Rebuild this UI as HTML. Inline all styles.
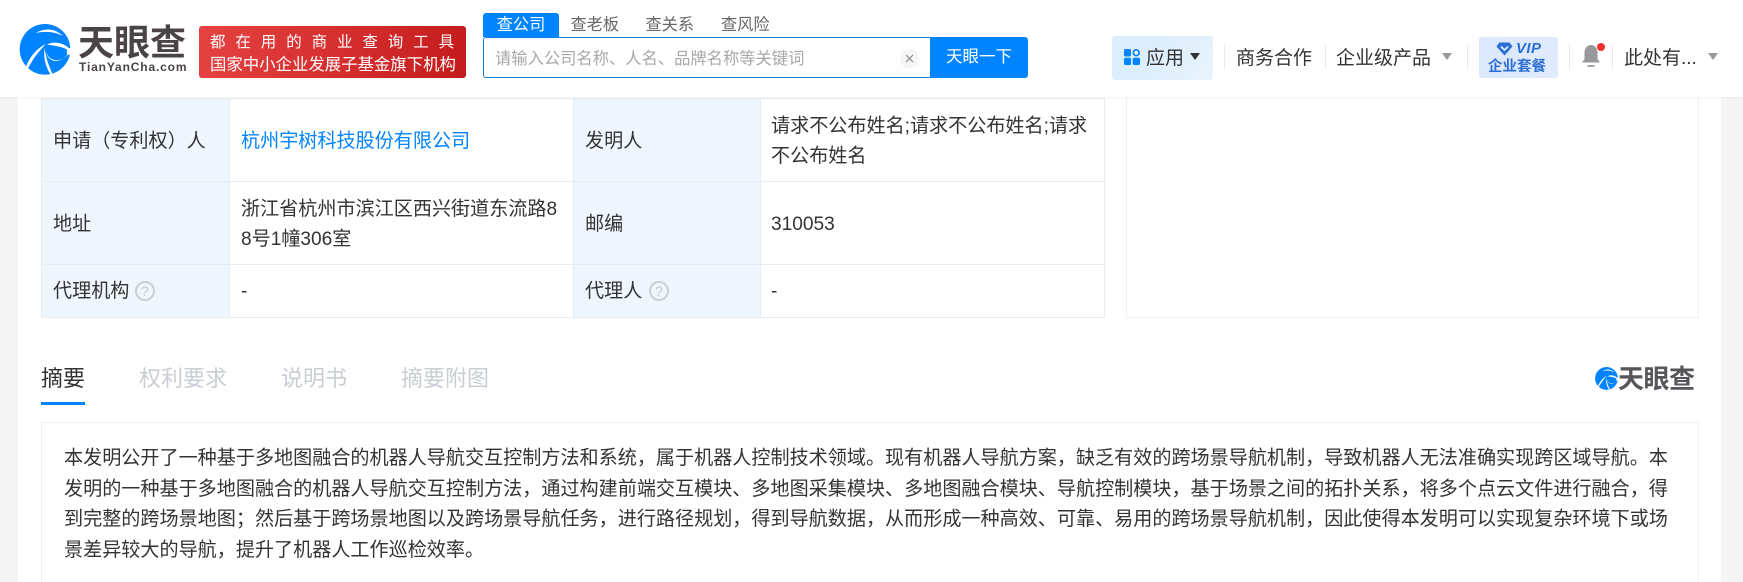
<!DOCTYPE html>
<html lang="zh-CN"><head><meta charset="utf-8"><title>天眼查</title>
<style>
html,body{margin:0;padding:0;width:1743px;height:582px;overflow:hidden}
body{font-family:"Liberation Sans","Noto Sans CJK SC",sans-serif;color:#333}
#w{position:absolute;left:0;top:0;width:1743px;height:582px;overflow:hidden;background:#f5f5f5}
.a{position:absolute;white-space:nowrap}
.t{position:absolute;white-space:nowrap;font-size:19.100px;line-height:30px;color:#333}
.lb{position:absolute;background:#eff6fd}
.h{position:absolute;background:#e6edf5}
.sep{position:absolute;width:1px;height:24px;top:45px;background:#e8e8e8}
.c{position:absolute;width:0;height:0;border-left:5.500px solid transparent;border-right:5.500px solid transparent;border-top:7px solid #999}
</style></head><body><div id="w">
<div class="a" style="left:18px;top:0;width:1703px;height:582px;background:#fff"></div>

<!-- table -->
<div class="lb" style="left:41px;top:98px;width:189px;height:220px"></div>
<div class="lb" style="left:573px;top:98px;width:188px;height:220px"></div>
<div class="h" style="left:41px;top:98px;width:1064px;height:1px"></div>
<div class="h" style="left:41px;top:181px;width:1064px;height:1px"></div>
<div class="h" style="left:41px;top:264px;width:1064px;height:1px"></div>
<div class="h" style="left:41px;top:317px;width:1064px;height:1px"></div>
<div class="h" style="left:41px;top:98px;width:1px;height:220px"></div>
<div class="h" style="left:229px;top:98px;width:1px;height:220px"></div>
<div class="h" style="left:573px;top:98px;width:1px;height:220px"></div>
<div class="h" style="left:760px;top:98px;width:1px;height:220px"></div>
<div class="h" style="left:1104px;top:98px;width:1px;height:220px"></div>
<div class="a" style="left:1126px;top:90px;width:571px;height:227px;border:1px solid #eef0f5;border-top:0"></div>

<div class="t" style="left:53px;top:127px">申请（专利权）人</div>
<div class="t" style="left:241px;top:127px;color:#0084ff">杭州宇树科技股份有限公司</div>
<div class="t" style="left:585px;top:127px">发明人</div>
<div class="t" style="left:771px;top:112px">请求不公布姓名;请求不公布姓名;请求</div>
<div class="t" style="left:771px;top:142px">不公布姓名</div>
<div class="t" style="left:53px;top:210px">地址</div>
<div class="t" style="left:241px;top:195px">浙江省杭州市滨江区西兴街道东流路8</div>
<div class="t" style="left:241px;top:225px">8号1幢306室</div>
<div class="t" style="left:585px;top:210px">邮编</div>
<div class="t" style="left:771px;top:210px">310053</div>
<div class="t" style="left:53px;top:277px">代理机构</div>
<div class="a" style="left:135px;top:281px;width:16px;height:16px;border:2px solid #ccd0d6;border-radius:50%;font-size:14px;line-height:16px;text-align:center;color:#c4c8ce">?</div>
<div class="t" style="left:241px;top:277px">-</div>
<div class="t" style="left:585px;top:277px">代理人</div>
<div class="a" style="left:649px;top:281px;width:16px;height:16px;border:2px solid #ccd0d6;border-radius:50%;font-size:14px;line-height:16px;text-align:center;color:#c4c8ce">?</div>
<div class="t" style="left:771px;top:277px">-</div>

<!-- tabs -->
<div class="a" style="left:41px;top:363px;font-size:22px;line-height:32px;color:#333">摘要</div>
<div class="a" style="left:41px;top:402px;width:44px;height:3px;background:#0084ff"></div>
<div class="a" style="left:139px;top:363px;font-size:22px;line-height:32px;color:#c9cdd4">权利要求</div>
<div class="a" style="left:281px;top:363px;font-size:22px;line-height:32px;color:#c9cdd4">说明书</div>
<div class="a" style="left:401px;top:363px;font-size:22px;line-height:32px;color:#c9cdd4">摘要附图</div>

<svg class="a" style="left:1595px;top:367px" width="23" height="23" viewBox="28 27 155 155"><circle cx="105.500" cy="104" r="77" fill="#0084ff"/><path d="M78 54C105 38 138 40 160 64C136 50 108 48 78 54Z" fill="#fff"/><path d="M112 90C132 78 160 84 178 100L178 108C160 96 135 92 112 90Z" fill="#fff"/><path d="M108 112C112 135 140 155 172 122L178 118C150 146 120 142 108 112Z" fill="#fff"/><path d="M108 88C80 100 56 130 44 166L50 170C66 136 86 110 108 88Z" fill="#fff"/><path d="M104 100C100 130 108 158 122 180L128 178C116 152 108 128 104 100Z" fill="#fff"/><path d="M172 100H190V120H172Z" fill="#fff"/></svg>
<div class="a" style="left:1618px;top:364px;font-size:26px;line-height:30px;font-weight:700;color:#55565b;letter-spacing:-.5px">天眼查</div>

<!-- abstract -->
<div class="a" style="left:41px;top:422px;width:1656px;height:170px;border:1px solid #eef0f2"></div>
<div class="a" style="left:64px;top:444px;font-size:19.100px;line-height:30.500px;color:#333">本发明公开了一种基于多地图融合的机器人导航交互控制方法和系统，属于机器人控制技术领域。现有机器人导航方案，缺乏有效的跨场景导航机制，导致机器人无法准确实现跨区域导航。本<br>发明的一种基于多地图融合的机器人导航交互控制方法，通过构建前端交互模块、多地图采集模块、多地图融合模块、导航控制模块，基于场景之间的拓扑关系，将多个点云文件进行融合，得<br>到完整的跨场景地图；然后基于跨场景地图以及跨场景导航任务，进行路径规划，得到导航数据，从而形成一种高效、可靠、易用的跨场景导航机制，因此使得本发明可以实现复杂环境下或场<br>景差异较大的导航，提升了机器人工作巡检效率。</div>

<!-- header -->
<div class="a" style="left:0;top:0;width:1743px;height:97px;background:#fff;box-shadow:0 1px 2px rgba(0,0,0,.05)"></div>

<svg class="a" style="left:19px;top:24px" width="52" height="51" viewBox="28 27 155 155"><circle cx="105.500" cy="104" r="77" fill="#0084ff"/><path d="M78 54C105 38 138 40 160 64C136 50 108 48 78 54Z" fill="#fff"/><path d="M112 90C132 78 160 84 178 100L178 108C160 96 135 92 112 90Z" fill="#fff"/><path d="M108 112C112 135 140 155 172 122L178 118C150 146 120 142 108 112Z" fill="#fff"/><path d="M108 88C80 100 56 130 44 166L50 170C66 136 86 110 108 88Z" fill="#fff"/><path d="M104 100C100 130 108 158 122 180L128 178C116 152 108 128 104 100Z" fill="#fff"/><path d="M172 100H190V120H172Z" fill="#fff"/></svg>
<div class="a" style="left:78px;top:22px;font-size:36px;line-height:42px;font-weight:700;color:#4a4544">天眼查</div>
<div class="a" style="left:79px;top:60px;font-size:12px;line-height:14px;font-weight:700;color:#4a4544;letter-spacing:.85px">TianYanCha.com</div>

<div class="a" style="left:199px;top:26px;width:267px;height:52px;border-radius:3px;background:linear-gradient(100deg,#e64242,#c41c1c)"></div>
<div class="a" style="left:210px;top:32px;width:246px;font-size:15.500px;line-height:22px;color:#fff;letter-spacing:9.900px">都在用的商业查询工具</div>
<div class="a" style="left:210px;top:54px;font-size:16.400px;line-height:23px;color:#fff">国家中小企业发展子基金旗下机构</div>

<!-- search -->
<div class="a" style="left:483px;top:13px;width:76px;height:24px;background:#0084ff;border-radius:3px 3px 0 0;color:#fff;font-size:16.200px;line-height:24px;text-align:center">查公司</div>
<div class="a" style="left:570.500px;top:13px;font-size:16.200px;line-height:24px;color:#666">查老板</div>
<div class="a" style="left:645.500px;top:13px;font-size:16.200px;line-height:24px;color:#666">查关系</div>
<div class="a" style="left:721px;top:13px;font-size:16.200px;line-height:24px;color:#666">查风险</div>
<div class="a" style="left:483px;top:37px;width:446px;height:39px;border:1px solid #0f7fe8;border-right:0;border-radius:3px 0 0 3px;background:#fff"></div>
<div class="a" style="left:495px;top:47px;font-size:16.300px;line-height:24px;color:#a8a8a8">请输入公司名称、人名、品牌名称等关键词</div>
<div class="a" style="left:900px;top:49px;width:19px;height:19px;border-radius:50%;background:#f5f5f5"></div>
<svg class="a" style="left:905px;top:54px" width="9" height="9" viewBox="0 0 9 9"><path d="M1 1L8 8M8 1L1 8" stroke="#888" stroke-width="1.200"/></svg>
<div class="a" style="left:930px;top:37px;width:98px;height:41px;background:#0084ff;border-radius:0 3px 3px 0;color:#fff;font-size:16.500px;line-height:41px;text-align:center">天眼一下</div>

<!-- right nav -->
<div class="a" style="left:1112px;top:36px;width:101px;height:44px;border-radius:3px;background:linear-gradient(120deg,#dceefd 40%,#e9f3fb 100%)"></div>
<svg class="a" style="left:1124px;top:49px" width="16" height="16" viewBox="0 0 16 16"><rect x="0" y="0" width="7" height="7.500" rx="1.500" fill="#0084ff"/><circle cx="12.200" cy="3.700" r="2.800" fill="#fff" stroke="#0084ff" stroke-width="1.800"/><rect x="0" y="8.700" width="7" height="7.300" rx="1.500" fill="#0084ff"/><rect x="8.700" y="8.700" width="7.300" height="7.300" rx="1.500" fill="#0084ff"/></svg>
<div class="a" style="left:1146px;top:43.500px;font-size:19px;line-height:30px;color:#333">应用</div>
<div class="c" style="left:1190px;top:53px;border-top-color:#333"></div>
<div class="sep" style="left:1224px"></div>
<div class="a" style="left:1236px;top:43.500px;font-size:19px;line-height:30px;color:#333">商务合作</div>
<div class="sep" style="left:1325px"></div>
<div class="a" style="left:1336px;top:43.500px;font-size:19px;line-height:30px;color:#333">企业级产品</div>
<div class="c" style="left:1442px;top:53px"></div>
<div class="sep" style="left:1467px"></div>
<div class="a" style="left:1479px;top:37px;width:79px;height:41px;border-radius:3px;background:linear-gradient(120deg,#dbe7fd,#e2ebfd)"></div>
<svg class="a" style="left:1496px;top:42px" width="17" height="14" viewBox="0 0 17 14"><path d="M3.500 .5H13.500L16.500 4.500L8.500 13.500L.5 4.500Z" fill="#2c6fd6"/><path d="M5 4.500L8.500 8L12 4.500" fill="none" stroke="#dfe9fd" stroke-width="1.800"/></svg>
<div class="a" style="left:1516px;top:40px;font-size:15px;line-height:18px;font-weight:700;font-style:italic;color:#2c6fd6;letter-spacing:.4px">VIP</div>
<div class="a" style="left:1488px;top:57px;font-size:14.500px;line-height:20px;font-weight:700;color:#2c6fd6">企业套餐</div>
<div class="sep" style="left:1569px"></div>
<svg class="a" style="left:1581px;top:44px" width="20" height="24" viewBox="0 0 20 24"><path d="M10 1C5.500 1 3.500 5 3.500 9V15L1 18.500H19L16.500 15V9C16.500 5 14.500 1 10 1Z" fill="#97999c"/><rect x="6.500" y="21" width="7" height="1.800" fill="#97999c"/></svg>
<div class="a" style="left:1597px;top:43px;width:8px;height:8px;border-radius:50%;background:#f5302e"></div>
<div class="sep" style="left:1612px"></div>
<div class="a" style="left:1624px;top:43.500px;font-size:19px;line-height:30px;color:#333">此处有...</div>
<div class="c" style="left:1708px;top:53px"></div>
</div></body></html>
